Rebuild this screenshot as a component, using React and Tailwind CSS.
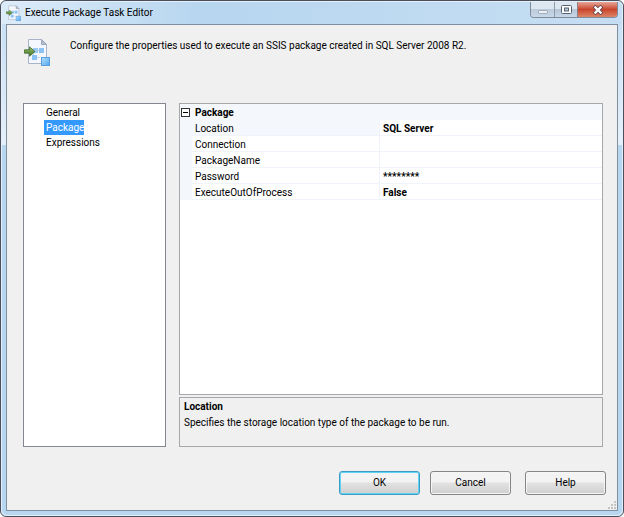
import React, { useState } from "react";

const pages = ["General", "Package", "Expressions"];

const initialProps = [
  { name: "Location", value: "SQL Server" },
  { name: "Connection", value: "" },
  { name: "PackageName", value: "" },
  { name: "Password", value: "********" },
  { name: "ExecuteOutOfProcess", value: "False" },
];

const PackageIcon = ({ className }) => (
  <svg viewBox="0 0 26 28" className={className} aria-hidden="true">
    <defs>
      <linearGradient id="arrow" x1="0" y1="0" x2="0" y2="1">
        <stop offset="0" stopColor="#9bc46c" />
        <stop offset="1" stopColor="#3f7426" />
      </linearGradient>
      <linearGradient id="cube" x1="0" y1="0" x2="1" y2="1">
        <stop offset="0" stopColor="#b5e0ff" />
        <stop offset="1" stopColor="#4fa6ee" />
      </linearGradient>
    </defs>
    <path d="M4.5 1.5h13l5 5v19h-18z" fill="#f4f7fd" stroke="#a9b4c9" />
    <path d="M17.5 1.5v5h5z" fill="#b4bdd0" stroke="#8f9bb3" strokeWidth=".8" />
    <path d="M14 12.5h2M9.5 18v-3M12 19.5h4" stroke="#c4d3e8" />
    <rect x="9" y="10" width="5" height="5" fill="#9cc9f4" />
    <rect x="15" y="10" width="5" height="5" fill="#8cc1f3" />
    <rect x="8" y="17" width="5" height="5" fill="#8cc1f3" />
    <path
      d="M.5 11.8h5V8.8l5.5 4.7-5.5 4.7v-3h-5z"
      fill="url(#arrow)"
      stroke="#41682e"
      strokeWidth=".8"
    />
    <rect x="17.5" y="19.5" width="8" height="8" fill="url(#cube)" stroke="#5a9edb" />
  </svg>
);

const CaptionButtons = () => (
  <div className="flex h-4 shrink-0 rounded-b border border-t-0 border-[#7f8b9b] overflow-hidden">
    <button
      aria-label="Minimize"
      className="w-6 flex items-center justify-center border-r border-[#8d9aab] bg-linear-to-b from-[#dde7f1] from-45% via-[#bccbdb] via-50% to-[#c8d8e8]"
    >
      <svg width="12" height="6" viewBox="0 0 12 6" className="mt-1">
        <rect x="1.5" y="1.5" width="9" height="3" rx=".5" fill="#eceff3" stroke="#a5afbb" />
      </svg>
    </button>
    <button
      aria-label="Maximize"
      className="w-[23px] flex items-center justify-center border-r border-[#8d7f88] bg-linear-to-b from-[#dde7f1] from-45% via-[#b5c5d6] via-50% to-[#c8d8e8]"
    >
      <svg width="11" height="9" viewBox="0 0 11 9">
        <rect x=".5" y=".5" width="10" height="8" rx="1" fill="#fff" stroke="#596273" />
        <rect x="3.5" y="3" width="4" height="3" fill="#b9c6d6" stroke="#596273" />
      </svg>
    </button>
    <button
      aria-label="Close"
      className="w-[39px] flex items-center justify-center bg-linear-to-b from-[#e4a596] from-0% via-[#c9442b] via-50% to-[#dc8468]"
    >
      <svg width="12" height="10" viewBox="0 0 12 10">
        <path d="M3.5 2.5l5 5M8.5 2.5l-5 5" stroke="#68474c" strokeWidth="4" strokeLinecap="square" />
        <path d="M3.5 2.5l5 5M8.5 2.5l-5 5" stroke="#fff" strokeWidth="2.4" strokeLinecap="square" />
      </svg>
    </button>
  </div>
);

const DialogButton = ({ children, primary }) => (
  <button
    className={`w-[81px] h-6 rounded-[3px] border text-black bg-linear-to-b from-[#f3f3f3] from-45% via-[#e2e2e2] via-50% to-[#cfcfcf] ${
      primary
        ? "border-[#3c9cc4] shadow-[inset_0_0_0_1px_#5fd3f5]"
        : "border-[#858585] shadow-[inset_0_0_0_1px_#f6f6f6]"
    }`}
  >
    {children}
  </button>
);

const PropertyGrid = ({ rows, selected, onSelect, onChange }) => {
  const [open, setOpen] = useState(true);

  return (
    <div className="flex-1 border border-[#a5a7ab] bg-white">
      <table className="w-full table-fixed border-separate border-spacing-0 leading-[15px]">
        <colgroup>
          <col className="w-3" />
          <col className="w-[188px]" />
          <col />
        </colgroup>
        <thead>
          <tr className="h-4 bg-[#f4f7fc]">
            <th className="p-0">
              <button
                aria-label="Toggle Package"
                onClick={() => setOpen(!open)}
                className="flex w-3 h-4 items-center"
              >
                <svg width="9" height="9" viewBox="0 0 9 9" className="ml-px">
                  <rect x=".5" y=".5" width="8" height="8" fill="#fff" stroke="#333" />
                  <path d={open ? "M2 4.5h5" : "M2 4.5h5M4.5 2v5"} stroke="#000" />
                </svg>
              </button>
            </th>
            <th colSpan={2} className="p-0 pt-px pl-[3px] text-left font-bold">
              Package
            </th>
          </tr>
        </thead>
        <tbody>
          {open &&
            rows.map((row) => (
              <tr key={row.name} className="h-4" onClick={() => onSelect(row.name)}>
                <td className="p-0 bg-[#f4f7fc]" />
                <th
                  scope="row"
                  className={`p-0 pl-[3px] text-left font-normal border-r border-b border-[#f0f4fa] ${
                    row.name === selected ? "bg-[#f4f7fc]" : ""
                  }`}
                >
                  <label htmlFor={row.name} className="block h-[15px] pt-px">
                    {row.name}
                  </label>
                </th>
                <td className="p-0 pl-[3px] border-b border-[#f0f4fa]">
                  <input
                    id={row.name}
                    value={row.value}
                    onChange={(e) => onChange(row.name, e.target.value)}
                    className="block w-full h-[15px] pt-px font-bold outline-none"
                  />
                </td>
              </tr>
            ))}
        </tbody>
      </table>
    </div>
  );
};

const App = () => {
  const [page, setPage] = useState("Package");
  const [props, setProps] = useState(initialProps);
  const [selected, setSelected] = useState("Location");

  const handleChange = (name, value) => {
    setProps((prev) => prev.map((p) => (p.name === name ? { ...p, value } : p)));
  };

  return (
    <div className="min-h-screen flex bg-white font-[Roboto,'Open_Sans',sans-serif] text-[10px] leading-4 text-black">
      <div className="flex-1 flex flex-col rounded-md border border-[#4a4f59] bg-linear-to-b from-[#c3dcf2] from-0% via-[#e6f0fa] via-28% to-[#b7d6f0] to-28% p-px">
        <div className="flex-1 flex flex-col rounded-[5px] px-1 pb-1 shadow-[0_0_0_1px_#e3effa]">
          {/* title bar */}
          <header className="-mx-1 pl-1 pr-1 h-[22px] flex items-start rounded-t-[5px] bg-linear-to-r from-[#dcebf8] from-0% via-[#b7d6ef] via-32% to-[#c6def3]">
            <div className="flex-1 flex items-center gap-1 h-[22px]">
              <PackageIcon className="w-[15px] h-4" />
              <h1>Execute Package Task Editor</h1>
            </div>
            <CaptionButtons />
          </header>

          <main className="flex-1 flex flex-col border border-[#7e8fa1] bg-[#f0f0f0]">
            <div className="flex items-start pt-[13px] pl-[17px] pr-4 h-[78px]">
              <PackageIcon className="w-[26px] h-7" />
              <p className="ml-5">
                Configure the properties used to execute an SSIS package created in SQL Server 2008 R2.
              </p>
            </div>

            <div className="flex-1 flex gap-[13px] pl-4 pr-3.5">
              <ul className="w-[143px] shrink-0 pt-px pl-5 border border-[#828790] bg-white">
                {pages.map((name) => (
                  <li key={name} className="h-[15px] flex">
                    <button
                      onClick={() => setPage(name)}
                      className={`h-[15px] leading-[15px] pl-0.5 ${
                        name === page ? "bg-[#3399ff] text-white" : ""
                      }`}
                    >
                      {name}
                    </button>
                  </li>
                ))}
              </ul>

              <div className="flex-1 flex flex-col gap-0.5">
                <PropertyGrid
                  rows={props}
                  selected={selected}
                  onSelect={setSelected}
                  onChange={handleChange}
                />
                <div className="h-[50px] pt-px px-1 border border-[#a5a7ab]">
                  <h2 className="font-bold">{selected}</h2>
                  <p>Specifies the storage location type of the package to be run.</p>
                </div>
              </div>
            </div>

            <footer className="flex justify-end pt-6 pr-[11px]">
              <DialogButton primary>OK</DialogButton>
              <div className="ml-2.5 flex gap-3.5">
                <DialogButton>Cancel</DialogButton>
                <DialogButton>Help</DialogButton>
              </div>
            </footer>
            <div className="h-[15px] flex justify-end items-end">
              <svg width="9" height="9" viewBox="0 0 9 9" aria-hidden="true">
                <path
                  d="M6 0h2v2h-2zM3 3h2v2h-2zM6 3h2v2h-2zM0 6h2v2h-2zM3 6h2v2h-2zM6 6h2v2h-2z"
                  fill="#c3c3c3"
                />
              </svg>
            </div>
          </main>
        </div>
      </div>
    </div>
  );
};

export default App;
